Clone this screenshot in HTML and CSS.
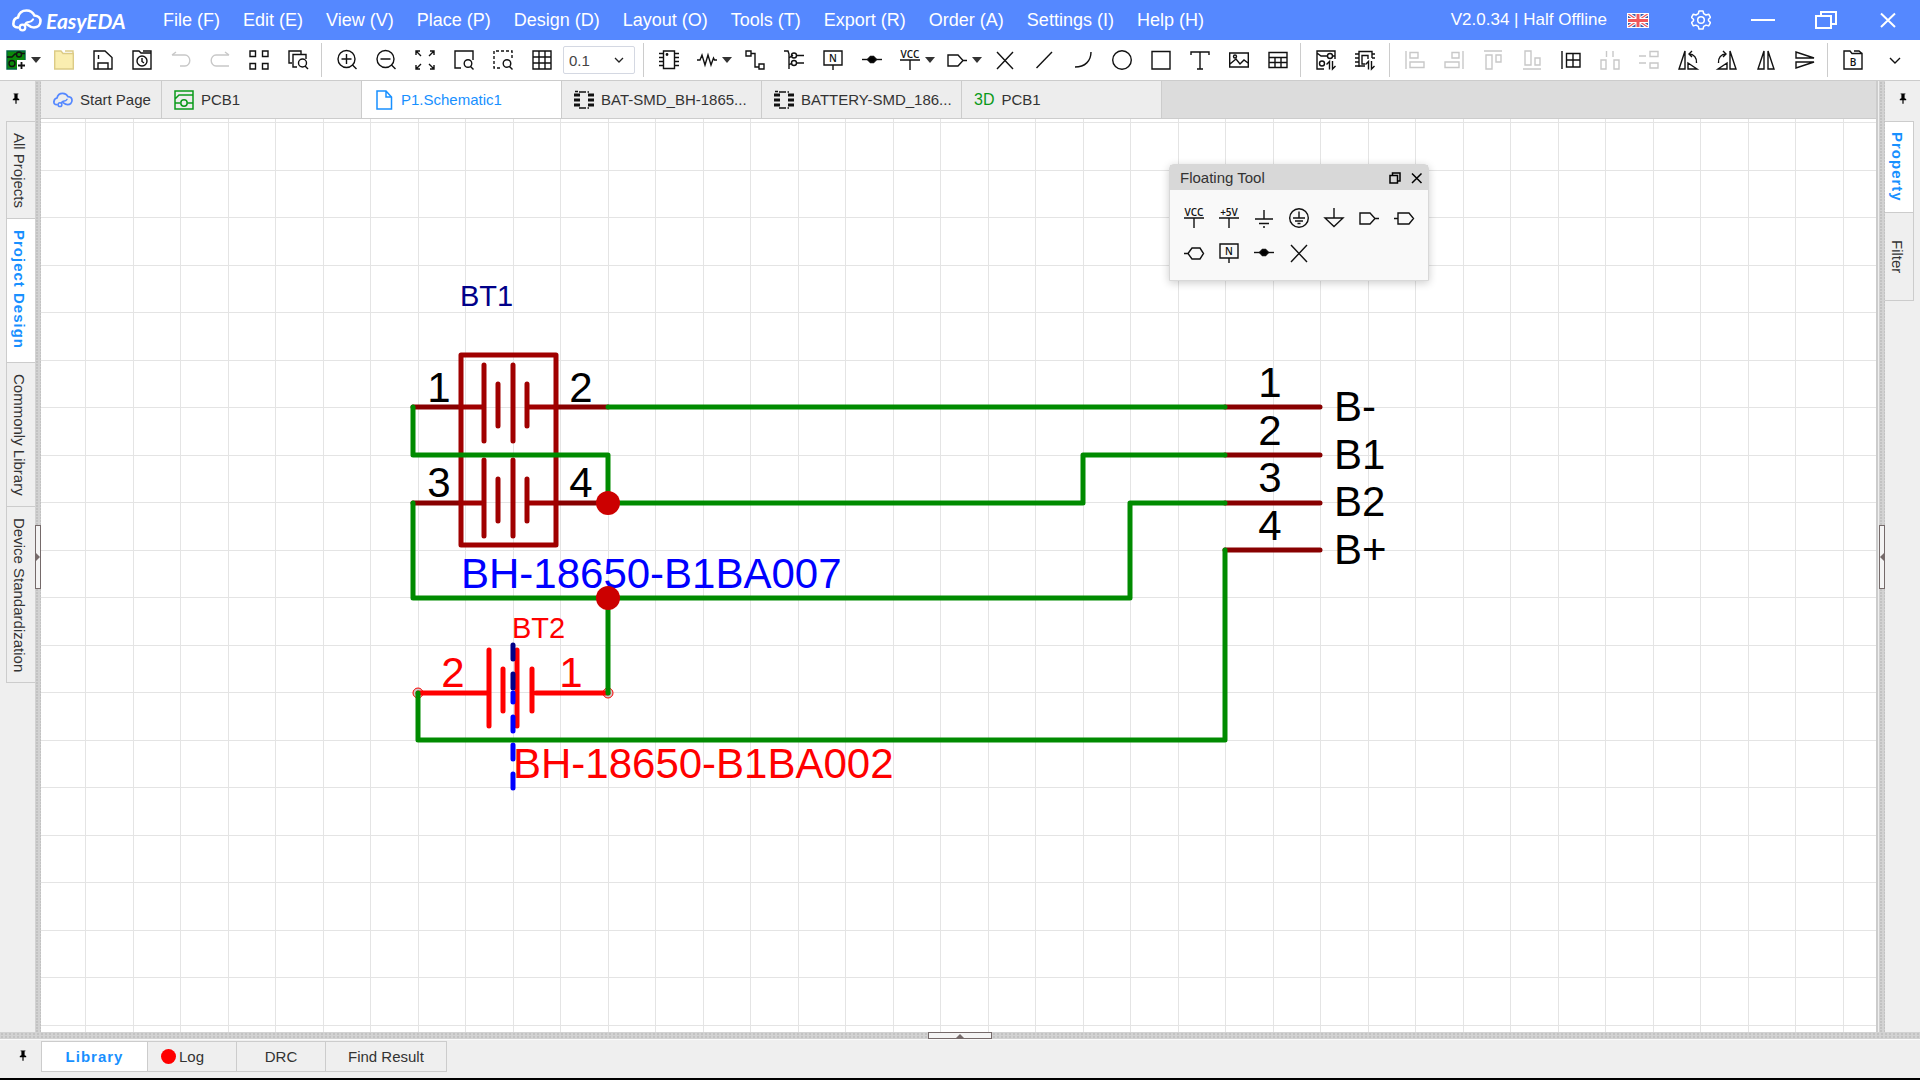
FILE: index.html
```html
<!DOCTYPE html>
<html lang="en">
<head>
<meta charset="utf-8">
<title>EasyEDA</title>
<link rel="stylesheet" href="styles.css">
</head>
<body>
<svg class="sprite" aria-hidden="true">
  <symbol id="pin" viewBox="0 0 10 14"><path d="M2 0h6v1H7v5l2 1v1.500H1V7l2-1V1H2z" fill="#000" stroke="none"/><path d="M5 8v5" stroke="#000" stroke-width="1.500"/></symbol>
  <symbol id="cloud" viewBox="0 0 30 23"><path d="M6 18.500C2 18.500 1 16 1.500 14c0-3 2-5 4.500-5.500C7 4 10 1.500 14.500 1.500c4 0 6.500 2 8 5 4 .3 6 3 6 5.500 0 4-3 6.500-6.500 6.500-3 0-5-1.500-7-3" fill="none" stroke="currentColor" stroke-width="2.600" stroke-linecap="round"/><circle cx="10.500" cy="18.500" r="2.800" fill="none" stroke="currentColor" stroke-width="2.200"/><path d="M12.500 16.500c1-3 3-3.500 4.500-3.500 2 0 3-1 4-2.500" fill="none" stroke="currentColor" stroke-width="2.200" stroke-linecap="round"/></symbol>
  <symbol id="junction" viewBox="0 0 20 20"><path d="M0 9.500h20"/><path d="M5.500 9.500 8.500 6.500h3l3 3-3 3h-3z" fill="#000"/></symbol>
  <symbol id="portout" viewBox="0 0 20 20"><path d="M1 5h10l5 5.500-5 5.500H1zM16 10.500h4"/></symbol>
  <symbol id="cross" viewBox="0 0 20 20"><path d="M2 2l16 17M18 2 2 19"/></symbol>
  <symbol id="footprint" viewBox="0 0 20 20"><path d="M5 2h10M5 18h10" fill="none" stroke="#111" stroke-width="1.600" stroke-dasharray="7 1.500"/><path d="M0 5h6M0 10h6M0 15h6M14 5h6M14 10h6M14 15h6" stroke="#111" stroke-width="3"/><path d="M1 1.500h3" stroke="#111" stroke-width="1.500"/></symbol>
</svg>

<header class="titlebar">
  <a class="brand" href="#"><svg class="brand-mark"><use href="#cloud"/></svg><span>EasyEDA</span></a>
  <nav class="menu">
    <button>File (F)</button><button>Edit (E)</button><button>View (V)</button><button>Place (P)</button><button>Design (D)</button><button>Layout (O)</button><button>Tools (T)</button><button>Export (R)</button><button>Order (A)</button><button>Settings (I)</button><button>Help (H)</button>
  </nav>
  <div class="status">V2.0.34 | Half Offline</div>
  <button class="flag" aria-label="Language"><svg width="22" height="15" viewBox="0 0 22 15"><rect width="22" height="15" fill="#3d62ad"/><path d="M0 0 22 15M22 0 0 15" stroke="#fff" stroke-width="3.500"/><path d="M0 0 22 15M22 0 0 15" stroke="#f0575c" stroke-width="1.200"/><path d="M11 0v15M0 7.500h22" stroke="#fff" stroke-width="5"/><path d="M11 0v15M0 7.500h22" stroke="#f0575c" stroke-width="3"/><rect x=".5" y=".5" width="21" height="14" fill="none" stroke="#fff"/></svg></button>
  <button class="gear" aria-label="Preferences"><svg width="20" height="20" viewBox="0 0 20 20"><path d="M8 1h4l.7 2.700 2.300 1.300 2.700-.8 1.800 3.300L17.500 9.300v1.400l2 1.900-1.800 3.300-2.700-.8-2.300 1.300L12 19H8l-.7-2.600L5 15.100l-2.700.8L.5 12.600l2-1.900V9.300l-2-1.800 1.800-3.300L5 5l2.300-1.300z" fill="none" stroke="#fff" stroke-width="1.500" stroke-linejoin="round"/><circle cx="10" cy="10" r="3.300" fill="none" stroke="#fff" stroke-width="1.500"/></svg></button>
  <button class="win" aria-label="Minimize"><svg width="24" height="20"><path d="M0 10h24" stroke="#fff" stroke-width="2"/></svg></button>
  <button class="win" aria-label="Restore"><svg width="22" height="20"><path d="M1 6h15v12H1zM6 6V2h15v12h-5" fill="none" stroke="#fff" stroke-width="2"/></svg></button>
  <button class="win" aria-label="Close"><svg width="16" height="20"><path d="M1 3.500 15 17M15 3.500 1 17" stroke="#fff" stroke-width="2"/></svg></button>
</header>

<div class="toolbar" role="toolbar">
  <div class="tools first">
    <button class="tool drop" aria-label="New"><svg class="ico" viewBox="0 0 20 20"><path d="M1 1h18v18H1z" fill="#0a8a0a" stroke="#064"/><path d="M1 7h5l3-3h2M15 3.500h4" /><circle cx="13" cy="4.500" r="2.500"/><circle cx="6" cy="13.500" r="3"/><path d="M11 10h9v10h-9z" fill="#fff" stroke="none"/><path d="M15.500 12v7M12 15.500h7" stroke-width="1.800"/></svg><i class="caret"></i></button>
    <button class="tool" aria-label="Open"><svg class="ico" viewBox="0 0 20 20"><path d="M.7 1h6.300l2 2.500h10.300V19H.7z" fill="#faeeb0" stroke="#dccb86"/><path d="M11 1h8v2.500" stroke="#dccb86"/></svg></button>
    <button class="tool" aria-label="Save"><svg class="ico" viewBox="0 0 20 20"><path d="M1 1h11l7 6.500V19H1zM5 19v-6h10v6M5.500 5v4"/></svg></button>
    <button class="tool" aria-label="History"><svg class="ico" viewBox="0 0 20 20"><path d="M1 1h6l2 2h10v16H1zM11 1h8v2"/><circle cx="10" cy="11" r="5"/><path d="M10 8v3.500l2 1.500"/></svg></button>
    <button class="tool off" aria-label="Undo"><svg class="ico" viewBox="0 0 20 20"><path d="M1 5h13a4.800 5.500 0 0 1 0 11H9M5 2 1 5"/></svg></button>
    <button class="tool off" aria-label="Redo"><svg class="ico" viewBox="0 0 20 20"><path d="M19 5H6a4.800 5.500 0 0 0 0 11h13M15 2l4 3"/></svg></button>
    <button class="tool" aria-label="Panels"><svg class="ico" viewBox="0 0 20 20"><path d="M1 1h5.500v5.500H1zM13.500 1H19v5.500h-5.500zM1 13.500h5.500V19H1zM13.500 13.500H19V19h-5.500z"/></svg></button>
    <button class="tool" aria-label="Find similar"><svg class="ico" viewBox="0 0 20 20"><path d="M4 13H1V1h12v3M9 17H5V4.500h13V9"/><circle cx="14.500" cy="13" r="4"/><path d="m17 16 3 3"/></svg></button>
  </div>
  <i class="sep"></i>
  <div class="tools">
    <button class="tool" aria-label="Zoom in"><svg class="ico" viewBox="0 0 20 20"><circle cx="9.500" cy="9" r="8.500"/><path d="M9.500 4v10M4.500 9h10M15.500 15l4 4"/></svg></button>
    <button class="tool" aria-label="Zoom out"><svg class="ico" viewBox="0 0 20 20"><circle cx="9.500" cy="9" r="8.500"/><path d="M4.500 9h10M15.500 15l4 4"/></svg></button>
    <button class="tool" aria-label="Fit all"><svg class="ico" viewBox="0 0 20 20"><path d="M1 5V1h4M1 1l5 5M15 1h4v4M19 1l-5 5M1 15v4h4M1 19l5-5M15 19h4v-4M19 19l-5-5"/></svg></button>
    <button class="tool" aria-label="Fit selection"><svg class="ico" viewBox="0 0 20 20"><path d="M7 18H1V1h18v9"/><circle cx="14" cy="13.500" r="3.800"/><path d="m16.500 16.500 3 3"/></svg></button>
    <button class="tool" aria-label="Fit area"><svg class="ico" viewBox="0 0 20 20"><path d="M7 18H1V1h18v9" stroke-dasharray="3 2"/><circle cx="14" cy="13.500" r="3.800"/><path d="m16.500 16.500 3 3"/></svg></button>
    <button class="tool" aria-label="Grid"><svg class="ico" viewBox="0 0 20 20"><path d="M1 1h18v18H1zM7 1v18M13 1v18M1 7h18M1 13h18"/></svg></button>
  </div>
  <select class="gridsize" aria-label="Grid size"><option>0.1</option></select>
  <i class="sep"></i>
  <div class="tools">
    <button class="tool" aria-label="Device"><svg class="ico" viewBox="0 0 20 20"><path d="M4.500 1h11v17.500h-11zM0 3.500h4.500M0 7.500h4.500M0 11.500h4.500M0 15.500h4.500M15.500 3.500H20M15.500 7.500H20M15.500 11.500H20M15.500 15.500H20"/><circle cx="8" cy="4.500" r=".7" fill="#000"/></svg></button>
    <button class="tool drop" aria-label="Resistor"><svg class="ico" viewBox="0 0 20 20"><path d="M0 10h3l2-5 3 10 3-10 3 10 2.500-7 1 2H20"/></svg><i class="caret"></i></button>
    <button class="tool" aria-label="Wire"><svg class="ico" viewBox="0 0 20 20"><path d="M1 1h5v5H1zM14 14h5v5h-5zM6 3.500h4V17h4"/></svg></button>
    <button class="tool" aria-label="Bus"><svg class="ico" viewBox="0 0 20 20"><path d="M0 1h4l1 3v15M5 8l4-3M5 15l3-2M12.500 5.500H20M12.500 13H20"/><circle cx="10" cy="5.500" r="2.500"/><circle cx="10" cy="13" r="2.500"/></svg></button>
    <button class="tool" aria-label="Net label"><svg class="ico" viewBox="0 0 20 20"><path d="M1 1h18v14H1zM10 15v5"/><text x="10" y="12" class="glyph">N</text></svg></button>
    <button class="tool" aria-label="Net junction"><svg class="ico"><use href="#junction"/></svg></button>
    <button class="tool drop" aria-label="Power"><svg class="ico" viewBox="0 0 20 20"><text x="10" y="8" class="glyph">VCC</text><path d="M0 10h20M10 10v10"/></svg><i class="caret"></i></button>
    <button class="tool drop" aria-label="Net port"><svg class="ico"><use href="#portout"/></svg><i class="caret"></i></button>
    <button class="tool" aria-label="No connect"><svg class="ico"><use href="#cross"/></svg></button>
    <button class="tool" aria-label="Line"><svg class="ico" viewBox="0 0 20 20"><path d="M2.500 18 18 2"/></svg></button>
    <button class="tool" aria-label="Arc"><svg class="ico" viewBox="0 0 20 20"><path d="M2 17c10 0 16-6 16-15"/></svg></button>
    <button class="tool" aria-label="Circle"><svg class="ico" viewBox="0 0 20 20"><circle cx="10" cy="10" r="9.300"/></svg></button>
    <button class="tool" aria-label="Rectangle"><svg class="ico" viewBox="0 0 20 20"><path d="M1 1.500h18V19H1z"/></svg></button>
    <button class="tool" aria-label="Text"><svg class="ico" viewBox="0 0 20 20"><path d="M1 5V2h18v3M10 2v17M7 19h6"/></svg></button>
    <button class="tool" aria-label="Image"><svg class="ico" viewBox="0 0 20 20"><path d="M.7 3h18.600v14H.7zM1 14l6-5 4 5 4-4 4 3"/><circle cx="6" cy="6.500" r="1.500"/></svg></button>
    <button class="tool" aria-label="Table"><svg class="ico" viewBox="0 0 20 20"><path d="M1 2.500h18v15H1zM1 7.500h18M1 12.500h18M7 7.500v10M13 7.500v10"/></svg></button>
  </div>
  <i class="sep"></i>
  <div class="tools convert">
    <button class="tool" aria-label="Convert to PCB"><svg class="ico" viewBox="0 0 20 20"><path d="M8 19H1V1h18v8M1 3l4 3h6M16 6h3"/><circle cx="14" cy="6" r="2.500"/><circle cx="6" cy="13.500" r="2.500"/><path d="M13.500 19.500v-8l-3 3M16.500 11v8l3-3"/></svg></button>
    <button class="tool" aria-label="Update PCB"><svg class="ico" viewBox="0 0 20 20"><path d="M4 17V1.500h13V8M0 4h4M0 8h4M0 12h4M0 16h10M17 4h3M17 8h3M10 14H7V5.500h6V9"/><path d="M13.500 19.500v-8l-3 3M16.500 11v8l3-3"/></svg></button>
  </div>
  <i class="sep"></i>
  <div class="tools">
    <button class="tool off" aria-label="Align left"><svg class="ico" viewBox="0 0 20 20"><path d="M1 1v18M5 2.500h8v5.500H5zM5 12h14v5.500H5z"/></svg></button>
    <button class="tool off" aria-label="Align right"><svg class="ico" viewBox="0 0 20 20"><path d="M19 1v18M8 2.500h7v5.500H8zM1 12h14v5.500H1z"/></svg></button>
    <button class="tool off" aria-label="Align top"><svg class="ico" viewBox="0 0 20 20"><path d="M1 1h18M3 5h6v14H3zM13 5h5v7h-5z"/></svg></button>
    <button class="tool off" aria-label="Align bottom"><svg class="ico" viewBox="0 0 20 20"><path d="M1 19h18M3 1h6v14H3zM13 8h5v7h-5z"/></svg></button>
    <button class="tool" aria-label="Align grid"><svg class="ico" viewBox="0 0 20 20"><path d="M1 1v18M5.500 3.500H19V17H5.500zM12 3.500V17M5.500 10H19"/></svg></button>
    <button class="tool off" aria-label="Distribute horizontally"><svg class="ico" viewBox="0 0 20 20"><path d="M6.500 1v6M13 1v6M1 10h5v9H1zM14 10h5v9h-5z"/></svg></button>
    <button class="tool off" aria-label="Distribute vertically"><svg class="ico" viewBox="0 0 20 20"><path d="M0 6h7M0 13h7M11 1.500h8v5h-8zM11 13h8v5h-8z"/></svg></button>
    <button class="tool" aria-label="Rotate left"><svg class="ico" viewBox="0 0 20 20"><path d="M7 1v18H1zM10 19v-6l9 6zM11 4c5 0 8 4 7.500 9M14 1l-3 3 3 3"/></svg></button>
    <button class="tool" aria-label="Rotate right"><svg class="ico" viewBox="0 0 20 20"><path d="M13 1v18h6zM10 19v-6l-9 6zM9 4c-5 0-8 4-7.500 9M6 1l3 3-3 3"/></svg></button>
    <button class="tool" aria-label="Flip horizontally"><svg class="ico" viewBox="0 0 20 20"><path d="M8 1v18H2zM12 1v18h6z"/></svg></button>
    <button class="tool" aria-label="Flip vertically"><svg class="ico" viewBox="0 0 20 20"><path d="M1 2v6h18zM1 18v-6h18z"/></svg></button>
  </div>
  <i class="sep"></i>
  <button class="tool" aria-label="BOM"><svg class="ico" viewBox="0 0 20 20"><path d="M1 1h6l2 2.500h10V19H1zM11 1h5l3 2.500"/><text x="10" y="16" class="glyph">B</text></svg></button>
  <button class="tool more" aria-label="More"><svg class="ico" viewBox="0 0 20 20"><path d="m5 8 5 5 5-5"/></svg></button>
</div>

<main class="workspace">
  <aside class="side left">
    <svg class="pin"><use href="#pin"/></svg>
    <div class="vtabs">
      <button>All Projects</button><button class="active">Project Design</button><button>Commonly Library</button><button>Device Standardization</button>
    </div>
  </aside>
  <div class="splitter vert"><button class="grip" aria-label="Toggle left panel"><i class="tri right"></i></button></div>

  <section class="editor">
    <div class="tabs">
      <button class="start"><svg class="tab-cloud"><use href="#cloud"/></svg>Start Page</button>
      <button><svg class="tab-ico green" viewBox="0 0 20 20"><path d="M1 1h18v18H1zM1 9l4-4h14M13.500 13H19M1 13h5"/><circle cx="10" cy="13" r="3.200"/></svg>PCB1</button>
      <button class="active"><svg class="tab-ico blue" viewBox="0 0 20 20"><path d="M3 1h9l5.500 6v12H3zM12 1v6h5.500"/></svg>P1.Schematic1</button>
      <button><svg class="tab-ico"><use href="#footprint"/></svg>BAT-SMD_BH-1865...</button>
      <button><svg class="tab-ico"><use href="#footprint"/></svg>BATTERY-SMD_186...</button>
      <button><span class="three">3D</span>PCB1</button>
    </div>
    <div class="canvas">
      <svg class="sheet" aria-label="Schematic">
        <defs>
          <pattern id="grid" width="95" height="95" patternUnits="userSpaceOnUse">
            <path d="M44 0h1v95h-1zM92 0h1v95h-1zM0 3h95v1H0zM0 51h95v1H0z" fill="#e4e4e4"/>
          </pattern>
        </defs>
        <rect width="100%" height="100%" fill="url(#grid)"/>
        <g transform="translate(-41 -119)">
          <g class="pinline">
            <path d="M413 407h47M555 407h53M413 503h47M555 503h53M1225 407h95M1225 455h95M1225 503h95M1225 550h95"/>
          </g>
          <g class="body">
            <rect x="461" y="355" width="95" height="190"/>
            <path d="M461 407h23M484 365v76M498 384v42M513 365v76M527 384v42M527 407h28"/>
            <path d="M461 503h23M484 460v76M498 479v42M513 460v76M527 479v42M527 503h28"/>
          </g>
          <g class="text-black">
            <text x="439" y="402" class="mid">1</text><text x="581" y="402" class="mid">2</text>
            <text x="439" y="497" class="mid">3</text><text x="581" y="497" class="mid">4</text>
            <text x="1270" y="397" class="mid">1</text><text x="1270" y="445" class="mid">2</text>
            <text x="1270" y="492" class="mid">3</text><text x="1270" y="540" class="mid">4</text>
            <text x="1334" y="421">B-</text><text x="1334" y="469">B1</text><text x="1334" y="516">B2</text><text x="1334" y="564">B+</text>
          </g>
          <text x="460" y="306" class="ref navy">BT1</text>
          <text x="461" y="588" class="blue">BH-18650-B1BA007</text>
          <g class="selected">
            <circle cx="418" cy="693" r="5"/><circle cx="608" cy="693" r="5"/>
            <path d="M418 693h71M489 650v76M503 669v42M517 650v76M532 669v42M536 693h72"/>
          </g>
          <g class="red">
            <text x="453" y="687" class="mid">2</text><text x="571" y="687" class="mid">1</text>
            <text x="512" y="638" class="ref">BT2</text>
            <text x="513" y="778">BH-18650-B1BA002</text>
          </g>
          <path class="dash navy-line" d="M513 645v14M513 674v14"/>
          <path class="dash" d="M513 693v9M513 717v14M513 745v14M513 774v14"/>
          <g class="wire">
            <path d="M608 407h617"/><path d="M413 407v48h195v48"/>
            <path d="M608 503h475v-48h142"/><path d="M413 503v95h717v-95h95"/>
            <path d="M608 598v95"/><path d="M418 693v47h807V550"/>
          </g>
          <circle class="dot" cx="608" cy="503" r="12"/><circle class="dot" cx="608" cy="598" r="12"/>
        </g>
      </svg>
      <div class="floating">
        <div class="floating-head"><span>Floating Tool</span>
          <button aria-label="Dock"><svg width="12" height="12"><path d="M1 3.500h7.500V11H1zM3.500 3.500V1H11v8H8.500" fill="none" stroke="#000" stroke-width="1.500"/></svg></button>
          <button aria-label="Close"><svg width="12" height="12"><path d="M1 1.500l9.500 9.500M10.500 1.500 1 11" fill="none" stroke="#000" stroke-width="1.500"/></svg></button>
        </div>
        <div class="floating-tools">
          <button aria-label="VCC"><svg class="ico" viewBox="0 0 20 20"><text x="10" y="8" class="glyph">VCC</text><path d="M0 10h20M10 10v10"/></svg></button>
          <button aria-label="+5V"><svg class="ico" viewBox="0 0 20 20"><text x="10" y="8" class="glyph">+5V</text><path d="M0 10h20M10 10v10"/></svg></button>
          <button aria-label="Ground"><svg class="ico" viewBox="0 0 20 20"><path d="M10 2v9M1 11h18M5 15.500h10M9 19h2"/></svg></button>
          <button aria-label="Protective ground"><svg class="ico" viewBox="0 0 20 20"><circle cx="10" cy="10" r="9.300"/><path d="M10 3.500V10M4 10h12M6 13h8M8.500 15.500h3"/></svg></button>
          <button aria-label="Analog ground"><svg class="ico" viewBox="0 0 20 20"><path d="M10 0v10M1 10h18l-9 8.500z"/></svg></button>
          <button aria-label="Port out"><svg class="ico"><use href="#portout"/></svg></button>
          <button aria-label="Port in"><svg class="ico" viewBox="0 0 20 20"><path d="M0 10.500h4M4 5h11l4.500 5.500L15 16H4z"/></svg></button>
          <button aria-label="Port bidirectional"><svg class="ico" viewBox="0 0 20 20"><path d="M0 10.500h4L8 5h8l3.500 5.500L16 16H8l-4-5.500"/></svg></button>
          <button aria-label="Net label"><svg class="ico" viewBox="0 0 20 20"><path d="M1 1h18v14H1zM10 15v5"/><text x="10" y="12" class="glyph">N</text></svg></button>
          <button aria-label="Junction"><svg class="ico"><use href="#junction"/></svg></button>
          <button aria-label="No connect"><svg class="ico"><use href="#cross"/></svg></button>
        </div>
      </div>
    </div>
  </section>

  <div class="splitter vert"><button class="grip" aria-label="Toggle right panel"><i class="tri left"></i></button></div>
  <aside class="side right">
    <svg class="pin"><use href="#pin"/></svg>
    <div class="vtabs"><button class="active">Property</button><button class="filter">Filter</button></div>
  </aside>
</main>

<div class="splitter horz"><button class="grip" aria-label="Toggle bottom panel"><i class="tri up"></i></button></div>
<footer class="bottom">
  <svg class="pin"><use href="#pin"/></svg>
  <div class="btabs">
    <button class="active">Library</button><button class="log"><i class="led"></i>Log</button><button>DRC</button><button>Find Result</button>
  </div>
</footer>
</body>
</html>
```
FILE: styles.css
```css
* { box-sizing: border-box; }
body {
  margin: 0;
  height: 100vh;
  display: flex;
  flex-direction: column;
  overflow: hidden;
  background: #efefef;
  border-bottom: 2px solid #000;
  font: 15px "Liberation Sans", Arial, sans-serif;
  color: #333;
}
button {
  font: inherit;
  color: inherit;
  background: none;
  border: 0;
  padding: 0;
  margin: 0;
}
svg { display: block; }
.sprite { position: absolute; width: 0; height: 0; }

/* title bar */
.titlebar {
  flex: none;
  display: flex;
  align-items: center;
  height: 40px;
  padding: 0 24px 0 12px;
  background: #5588ff;
  color: #fff;
  font-size: 18px;
}
.brand {
  display: flex;
  align-items: center;
  gap: 4px;
  width: 151px;
  color: #fff;
  text-decoration: none;
  font: italic 700 21px Lato, sans-serif;
}
.brand-mark { width: 30px; height: 23px; }
.menu { display: flex; gap: 23px; white-space: nowrap; }
.status { margin-left: auto; font-size: 17px; white-space: nowrap; }
.flag { margin-left: 20px; }
.gear { margin-left: 42px; }
.win { margin-left: 40px; }
.win:last-child { margin-left: 43px; }

/* toolbar */
.toolbar {
  flex: none;
  display: flex;
  align-items: center;
  height: 41px;
  padding-right: 6px;
  background: #fff;
  border-bottom: 1px solid #ccc;
}
.tools { display: flex; }
.tools.first { margin: 0 1px 0 -3px; }
.tools.convert { padding-right: 2px; }
.tool {
  flex: none;
  display: flex;
  align-items: center;
  justify-content: center;
  width: 39px;
  height: 40px;
}
.tool.drop { width: 47px; justify-content: flex-start; padding-left: 9px; gap: 5px; }
.tool.more { margin-left: auto; }
.ico {
  flex: none;
  width: 20px;
  height: 20px;
  overflow: visible;
  fill: none;
  stroke: #111;
  stroke-width: 1.4;
}
.off .ico { stroke: #c8c8c8; }
.glyph {
  font: 600 10px "Open Sans", sans-serif;
  fill: #111;
  stroke: none;
  text-anchor: middle;
}
.caret {
  border: 5px solid transparent;
  border-top: 6px solid #333;
  border-bottom: 0;
}
.sep { flex: none; width: 1px; height: 34px; margin: 0 5px 0 3px; background: #ccc; }
.gridsize {
  appearance: none;
  width: 72px;
  height: 28px;
  margin: 0 5px 0 2px;
  padding: 0 5px;
  border: 1px solid #d4d8e2;
  border-radius: 2px;
  background: url("data:image/svg+xml,%3Csvg xmlns='http://www.w3.org/2000/svg' width='10' height='10'%3E%3Cpath d='m1 3 4 4 4-4' fill='none' stroke='%23222' stroke-width='1.300'/%3E%3C/svg%3E") right 10px center no-repeat #fff;
  font: inherit;
  color: #444;
}

/* workspace */
.workspace { flex: 1; min-height: 0; display: flex; }
.side { flex: none; width: 35px; background: #efefef; }
.side.left { padding-left: 6px; }
.side.right { padding-right: 6px; }
.pin { flex: none; width: 8px; height: 12px; }
.side .pin { margin: 12px auto 16px 6px; }
.side.right .pin { margin-left: 14px; }
.vtabs { display: flex; flex-direction: column; border: 1px solid #ccc; }
.left .vtabs { border-right: 0; }
.right .vtabs { border-left: 0; }
.vtabs button {
  writing-mode: vertical-rl;
  width: 100%;
  padding: 11px 4px 10px 0;
  line-height: 24px;
  white-space: nowrap;
  border-bottom: 1px solid #ccc;
}
.vtabs button:last-child { border-bottom: 0; }
.left .vtabs .active { padding: 11px 4px 13px 0; }
.right .vtabs .active { padding: 10px 4px 10px 0; }
.vtabs .filter { padding: 27px 4px 27px 0; }
.vtabs .active, .btabs .active {
  background: #fff;
  color: #1890ff;
  font-weight: 700;
  letter-spacing: 1px;
}
.splitter {
  flex: none;
  display: flex;
  align-items: center;
  justify-content: center;
  background: radial-gradient(circle at 2px 2px, #c2c2c2 1px, transparent 1px) 0 0 / 4px 3px, #d2d2d2;
}
.splitter.vert { width: 6px; }
.splitter.horz { height: 7px; }
.grip {
  display: flex;
  align-items: center;
  justify-content: center;
  width: 6px;
  height: 64px;
  border: 1px solid #756a6a;
  background: #f4f4f4;
}
.horz .grip { width: 64px; height: 7px; }
.tri { border: 4px solid transparent; }
.tri.right { border-left-color: #756a6a; border-right: 0; }
.tri.left { border-right-color: #756a6a; border-left: 0; }
.tri.up { border-bottom-color: #756a6a; border-top: 0; }

.editor {
  flex: 1;
  min-width: 0;
  display: flex;
  flex-direction: column;
  border-right: 2px solid #ccc;
  margin-right: 1px;
}
.tabs {
  flex: none;
  display: flex;
  height: 38px;
  background: #dcdcdc;
  border-bottom: 1px solid #ccc;
}
.tabs button {
  display: flex;
  align-items: center;
  gap: 7px;
  width: 200px;
  padding-left: 12px;
  border-right: 1px solid #ccc;
  background: #ededed;
  white-space: nowrap;
}
.tabs .start { width: 121px; }
.tabs .active { background: #fff; color: #1890ff; }
.tab-cloud { width: 20px; height: 16px; color: #5588ff; }
.tab-ico { flex: none; width: 20px; height: 20px; fill: none; stroke-width: 1.5; }
.green { stroke: #0a9a1a; }
.blue { stroke: #1890ff; }
.three { color: #0a9a1a; font-size: 16px; }

/* drawing sheet */
.canvas { position: relative; flex: 1; min-height: 0; background: #fff; }
.sheet { width: 100%; height: 100%; font-size: 42px; }
.sheet path, .sheet rect { stroke-linecap: round; stroke-linejoin: round; }
.pinline, .body, .selected, .wire, .dash { fill: none; stroke-width: 5px; }
.pinline { stroke: #880000; }
.body { stroke: #a00000; }
.wire { stroke: #008b00; }
.selected { stroke: #f00; }
.selected circle { fill: #ccc; stroke-width: 1px; }
.dash { stroke: #00f; }
.navy-line { stroke: #000088; }
.dot { fill: #c00; }
.mid { text-anchor: middle; }
.text-black { fill: #000; }
.ref { font-size: 29px; }
.navy { fill: #000088; }
text.blue { fill: #00f; stroke: none; }
.red { fill: #f00; }

.floating {
  position: absolute;
  top: 45px;
  right: 447px;
  width: 260px;
  padding-bottom: 10px;
  background: #f9f9f9;
  border: 1px solid #d8d8d8;
  border-radius: 5px 5px 0 0;
  box-shadow: 0 2px 8px rgba(0, 0, 0, .2);
}
.floating-head {
  display: flex;
  align-items: center;
  gap: 10px;
  height: 25px;
  padding: 0 5px 0 10px;
  background: #d8d8d8;
}
.floating-head span { flex: 1; }
.floating-tools {
  display: grid;
  grid-template-columns: repeat(7, 35px);
  grid-auto-rows: 35px;
  padding: 10px 6px 0;
}
.floating-tools button { display: grid; place-items: center; }

/* bottom panel */
.bottom { flex: none; display: flex; height: 39px; padding: 1px 0 6px 19px; border-top: 1px solid #fafafa; }
.bottom .pin { margin: 9px 14px 0 0; }
.btabs { display: flex; border: 1px solid #ccc; }
.btabs button {
  min-width: 89px;
  padding: 0 22px;
  border-right: 1px solid #ccc;
}
.btabs button:last-child { border-right: 0; }
.btabs .active { width: 106px; }
.btabs .log { display: flex; align-items: center; gap: 3px; padding: 0 13px; }
.led { width: 15px; height: 15px; border-radius: 50%; background: #f00; }
```
